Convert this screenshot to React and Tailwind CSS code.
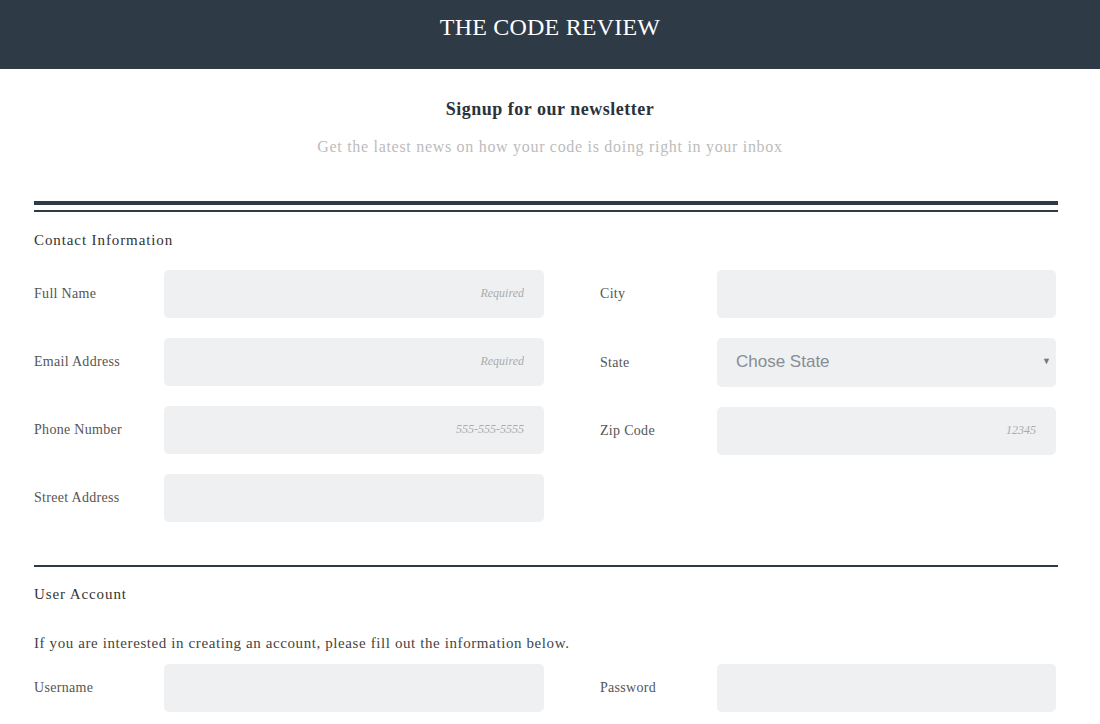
const serif = { fontFamily: '"Liberation Serif", "DejaVu Serif", serif' };

function Field({ label, placeholder, labelWidth }) {
  return (
    <div className="flex items-center">
      <label className={`${labelWidth} shrink-0 text-[14px] text-[#555] tracking-[0.3px]`}>{label}</label>
      <input
        placeholder={placeholder}
        className="h-[48px] flex-1 rounded-[5px] bg-[#eff0f2] px-5 text-right text-[12px] italic text-[#666] outline-none placeholder:text-[#a9acb0]"
        style={serif}
      />
    </div>
  );
}

export default function App() {
  return (
    <div className="min-h-screen bg-white" style={serif}>
      <header className="flex h-[69px] items-center justify-center bg-[#2e3a46]">
        <h1 className="-mt-[16px] text-[24px] tracking-[0.2px] text-white">THE CODE REVIEW</h1>
      </header>

      <div className="pt-[27px] text-center">
        <h2 className="text-[18px] font-bold tracking-[0.5px] text-[#2b323a]">Signup for our newsletter</h2>
        <p className="mt-[12px] text-[16px] tracking-[0.7px] text-[#bcbcbc]">
          Get the latest news on how your code is doing right in your inbox
        </p>
      </div>

      <form className="ml-[34px] w-[1024px] pt-[42px]">
        <div className="h-[4px] bg-[#2e3a46]" />
        <div className="mt-[5px] h-[2px] bg-[#2e3a46]" />

        <h3 className="mt-[17px] text-[15px] tracking-[0.9px] text-[#333]">Contact Information</h3>

        <div className="mt-[18px] flex">
          <div className="flex w-[510px] flex-col gap-[20px]">
            <Field label="Full Name" placeholder="Required" labelWidth="w-[130px]" />
            <Field label="Email Address" placeholder="Required" labelWidth="w-[130px]" />
            <Field label="Phone Number" placeholder="555-555-5555" labelWidth="w-[130px]" />
            <Field label="Street Address" placeholder="" labelWidth="w-[130px]" />
          </div>
          <div className="ml-[56px] flex w-[456px] flex-col gap-[20px]">
            <Field label="City" placeholder="" labelWidth="w-[117px]" />
            <div className="flex items-center">
              <label className="w-[117px] shrink-0 text-[14px] text-[#555] tracking-[0.3px]">State</label>
              <div className="relative h-[49px] flex-1">
                <select
                  className="h-full w-full appearance-none rounded-[5px] bg-[#eff0f2] pl-[19px] text-[17px] text-[#878d94] outline-none"
                  style={{ fontFamily: '"Liberation Sans", Arial, sans-serif' }}
                  defaultValue=""
                >
                  <option value="">Chose State</option>
                </select>
                <span className="pointer-events-none absolute right-[5px] top-[17px] text-[9px] text-[#777]">▼</span>
              </div>
            </div>
            <Field label="Zip Code" placeholder="12345" labelWidth="w-[117px]" />
          </div>
        </div>

        <div className="mt-[43px] h-[2px] bg-[#2e3a46]" />

        <h3 className="mt-[16px] text-[15px] tracking-[0.9px] text-[#333]">User Account</h3>
        <p className="mt-[27px] text-[15px] tracking-[0.6px] text-[#444]">
          If you are interested in creating an account, please fill out the information below.
        </p>

        <div className="mt-[9px] flex">
          <div className="w-[510px]">
            <Field label="Username" placeholder="" labelWidth="w-[130px]" />
          </div>
          <div className="ml-[56px] w-[456px]">
            <Field label="Password" placeholder="" labelWidth="w-[117px]" />
          </div>
        </div>
      </form>
    </div>
  );
}
